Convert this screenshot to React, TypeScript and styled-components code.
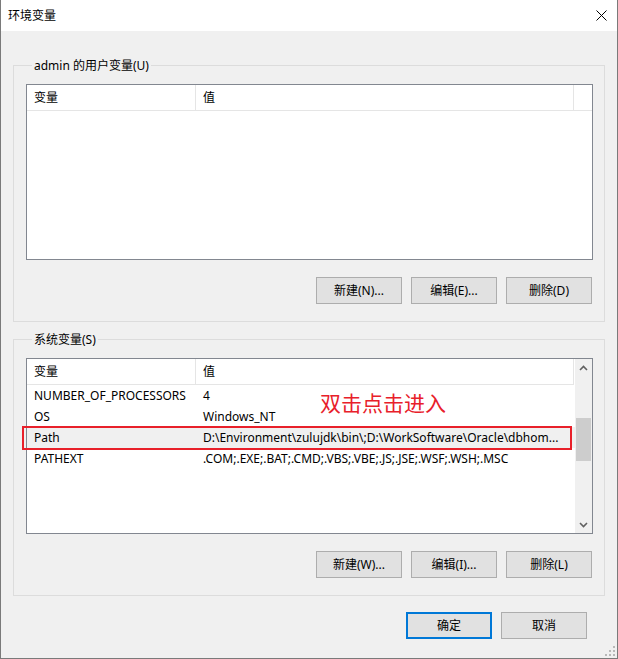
import React from "react";
import styled, { createGlobalStyle } from "styled-components";

const GlobalStyle = createGlobalStyle`
  html, body { margin: 0; padding: 0; background: #f0f0f0; }
  body {
    font-family: "Noto Sans", "Noto Sans CJK SC", sans-serif;
    font-size: 12px;
    color: #000;
  }
  * { box-sizing: border-box; }
`;

const Window = styled.div`
  position: relative;
  width: 618px;
  height: 659px;
  border: 1px solid #7a7a7a;
  border-top: 0;
  background: #f0f0f0;
  display: flex;
  flex-direction: column;
`;

const TitleBar = styled.div`
  height: 31px;
  flex: none;
  background: #fff;
  display: flex;
  align-items: center;
  justify-content: space-between;
  padding: 0 10px 0 7px;
`;

const Title = styled.span`
  font-size: 12px;
  line-height: 16px;
`;

const Body = styled.div`
  flex: 1;
  display: flex;
  flex-direction: column;
  padding: 26px 12px 0 12px;
`;

const Group = styled.fieldset<{ $gap?: number }>`
  margin: ${(p) => p.$gap ?? 0}px 0 0 0;
  border: 1px solid #dcdcdc;
  padding: 10px 11px 17px 12px;
  min-width: 0;
`;

const Legend = styled.legend`
  font-size: 12px;
  line-height: 17px;
  padding: 0 2px;
  margin-left: 6px;
`;

const ListView = styled.div`
  position: relative;
  height: 176px;
  border: 1px solid #828790;
  background: #fff;
  display: flex;
`;

const ListContent = styled.div`
  flex: 1;
  min-width: 0;
  display: flex;
  flex-direction: column;
`;

const HeaderRow = styled.div`
  display: flex;
  height: 26px;
  flex: none;
`;

const HeaderCell = styled.div<{ $w?: number }>`
  width: ${(p) => (p.$w ? `${p.$w}px` : "auto")};
  flex: ${(p) => (p.$w ? "none" : "1")};
  height: 26px;
  border-bottom: 1px solid #e5e5e5;
  border-right: ${(p) => (p.$w ? "1px solid #e5e5e5" : "0")};
  padding-left: 7px;
  display: flex;
  align-items: center;
  line-height: 16px;
  white-space: nowrap;
`;

const Row = styled.div<{ $focused?: boolean }>`
  display: flex;
  height: 21px;
  align-items: center;
  background: ${(p) => (p.$focused ? "#f0f0f0" : "transparent")};
`;

const Cell = styled.div<{ $w?: number }>`
  width: ${(p) => (p.$w ? `${p.$w}px` : "auto")};
  flex: ${(p) => (p.$w ? "none" : "1")};
  min-width: 0;
  padding-left: 7px;
  white-space: nowrap;
  overflow: hidden;
  line-height: 16px;
`;

const ScrollBar = styled.div`
  width: 17px;
  flex: none;
  background: #f0f0f0;
  display: flex;
  flex-direction: column;
  align-items: stretch;
`;

const ScrollArrow = styled.div`
  height: 17px;
  flex: none;
  display: flex;
  align-items: center;
  justify-content: center;
`;

const ScrollTrack = styled.div`
  flex: 1;
  display: flex;
  flex-direction: column;
  padding: 42px 1px 0 1px;
`;

const ScrollThumb = styled.div`
  height: 43px;
  background: #cdcdcd;
`;

const Highlight = styled.div`
  position: absolute;
  left: -5px;
  top: 67px;
  width: 550px;
  height: 24px;
  border: 2px solid #e8202a;
  pointer-events: none;
`;

const Note = styled.div`
  position: absolute;
  left: 293px;
  top: 31px;
  color: #e8202a;
  font-family: "Noto Sans CJK SC", sans-serif;
  font-size: 21px;
  line-height: 24px;
  white-space: nowrap;
`;

const ButtonRow = styled.div`
  display: flex;
  justify-content: flex-end;
  gap: 9px;
  margin-top: 17px;
  padding-right: 1px;
`;

const Button = styled.button<{ $default?: boolean }>`
  width: 86px;
  height: 27px;
  margin: 0;
  padding: 0;
  background: #e1e1e1;
  border: ${(p) => (p.$default ? "2px solid #0078d7" : "1px solid #adadad")};
  font-family: "Noto Sans", "Noto Sans CJK SC", sans-serif;
  font-size: 12px;
  color: #000;
  line-height: 16px;
`;

const Footer = styled.div`
  display: flex;
  justify-content: flex-end;
  gap: 9px;
  padding: 16px 18px 0 0;
`;

const Grip = styled.svg`
  position: absolute;
  right: 2px;
  bottom: 2px;
`;

type Item = { name: string; value: string; focused?: boolean };

const sysVars: Item[] = [
  { name: "NUMBER_OF_PROCESSORS", value: "4" },
  { name: "OS", value: "Windows_NT" },
  {
    name: "Path",
    value: "D:\\Environment\\zulujdk\\bin\\;D:\\WorkSoftware\\Oracle\\dbhom...",
    focused: true,
  },
  { name: "PATHEXT", value: ".COM;.EXE;.BAT;.CMD;.VBS;.VBE;.JS;.JSE;.WSF;.WSH;.MSC" },
];

const CloseIcon = () => (
  <svg width="11" height="11" viewBox="0 0 11 11">
    <path d="M0.5 0.5 L10.5 10.5 M10.5 0.5 L0.5 10.5" stroke="#000" strokeWidth="1" fill="none" />
  </svg>
);

const Chevron = ({ up }: { up?: boolean }) => (
  <svg width="9" height="6" viewBox="0 0 9 6">
    <path
      d={up ? "M1 5 L4.5 1.5 L8 5" : "M1 1 L4.5 4.5 L8 1"}
      stroke="#606060"
      strokeWidth="1.6"
      fill="none"
    />
  </svg>
);

export default function App() {
  return (
    <>
      <GlobalStyle />
      <Window>
        <TitleBar>
          <Title>环境变量</Title>
          <CloseIcon />
        </TitleBar>
        <Body>
          <Group>
            <Legend>admin 的用户变量(U)</Legend>
            <ListView>
              <ListContent>
                <HeaderRow>
                  <HeaderCell $w={169}>变量</HeaderCell>
                  <HeaderCell $w={378}>值</HeaderCell>
                  <HeaderCell />
                </HeaderRow>
              </ListContent>
            </ListView>
            <ButtonRow>
              <Button>新建(N)...</Button>
              <Button>编辑(E)...</Button>
              <Button>删除(D)</Button>
            </ButtonRow>
          </Group>
          <Group $gap={9}>
            <Legend>系统变量(S)</Legend>
            <ListView>
              <ListContent>
                <HeaderRow>
                  <HeaderCell $w={169}>变量</HeaderCell>
                  <HeaderCell $w={378}>值</HeaderCell>
                </HeaderRow>
                {sysVars.map((v) => (
                  <Row key={v.name} $focused={v.focused}>
                    <Cell $w={169}>{v.name}</Cell>
                    <Cell>{v.value}</Cell>
                  </Row>
                ))}
              </ListContent>
              <ScrollBar>
                <ScrollArrow>
                  <Chevron up />
                </ScrollArrow>
                <ScrollTrack>
                  <ScrollThumb />
                </ScrollTrack>
                <ScrollArrow>
                  <Chevron />
                </ScrollArrow>
              </ScrollBar>
              <Highlight />
              <Note>双击点击进入</Note>
            </ListView>
            <ButtonRow>
              <Button>新建(W)...</Button>
              <Button>编辑(I)...</Button>
              <Button>删除(L)</Button>
            </ButtonRow>
          </Group>
          <Footer>
            <Button $default>确定</Button>
            <Button>取消</Button>
          </Footer>
        </Body>
        <Grip width="10" height="10" viewBox="0 0 10 10">
          <g fill="#b8b8b8">
            <rect x="8" y="0" width="2" height="2" />
            <rect x="4" y="4" width="2" height="2" />
            <rect x="8" y="4" width="2" height="2" />
            <rect x="0" y="8" width="2" height="2" />
            <rect x="4" y="8" width="2" height="2" />
            <rect x="8" y="8" width="2" height="2" />
          </g>
        </Grip>
      </Window>
    </>
  );
}
